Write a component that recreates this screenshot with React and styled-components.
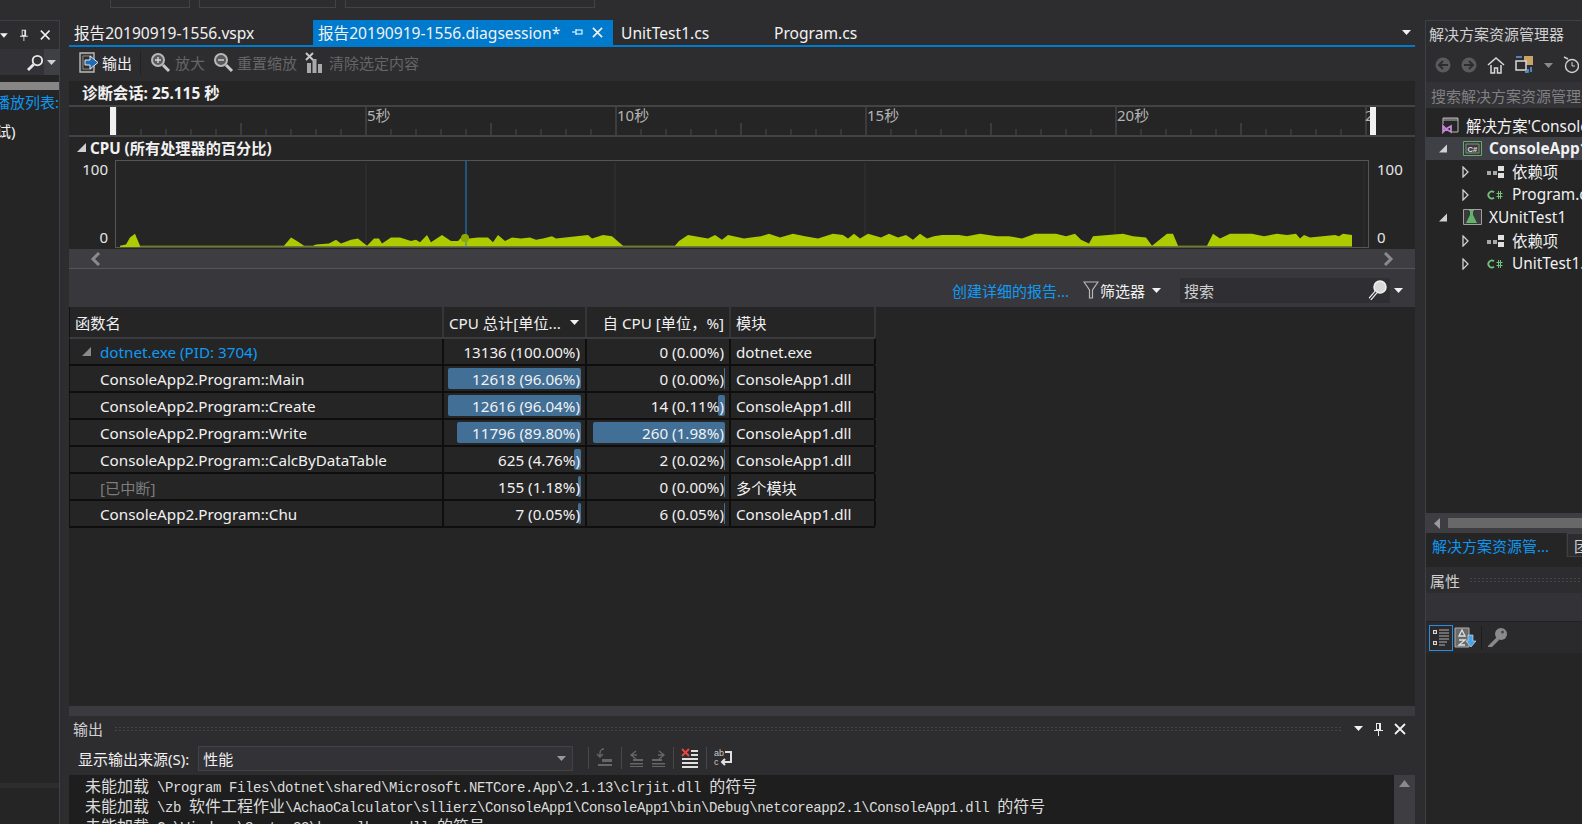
import styled, { createGlobalStyle } from "styled-components";

const Global = createGlobalStyle`
  html, body { margin: 0; padding: 0; background: #2d2d30; }
  body { font-family: "Noto Sans", "Noto Sans CJK SC", sans-serif; font-size: 15px; color: #f1f1f1; }
  * { box-sizing: border-box; }
`;

const mono = `"Liberation Mono", "Noto Sans CJK SC", monospace`;

const Shell = styled.div`
  width: 1582px;
  height: 824px;
  overflow: hidden;
  display: grid;
  grid-template-columns: 60px 1355px 167px;
  grid-template-rows: 20px 804px;
  background: #2d2d30;
`;

const TopStrip = styled.div`
  grid-column: 1 / -1;
  display: flex;
  padding-left: 110px;
  gap: 9px;
  align-items: flex-start;
`;

const TopBox = styled.div`
  width: ${(p) => p.$w}px;
  height: 8px;
  border: 1px solid #434346;
  border-top: none;
  overflow: hidden;
  display: flex;
  align-items: flex-end;
  padding-left: 9px;
  white-space: nowrap;
`;

const TopText = styled.span`
  margin-bottom: 7px;
  line-height: 20px;
  font-size: 15px;
`;

/* left docked panel */
const LeftPanel = styled.aside`
  display: flex;
  flex-direction: column;
  background: #252526;
  border: 1px solid #3f3f46;
  border-width: 1px 1px 0 0;
  overflow: hidden;
`;

const LeftTitle = styled.div`
  height: 28px;
  background: #2d2d30;
  display: flex;
  align-items: center;
  justify-content: flex-end;
  gap: 12px;
  padding-right: 9px;
`;

const LeftSearch = styled.div`
  height: 26px;
  background: #333337;
  display: flex;
  align-items: center;
  justify-content: flex-end;
`;

const LeftSearchArrow = styled.div`
  width: 15px;
  height: 26px;
  background: #3f3f46;
  display: flex;
  align-items: center;
  justify-content: center;
`;

const LeftBand = styled.div`
  height: 8px;
  margin-top: 7px;
  background: #868686;
`;

const LeftLine = styled.div`
  white-space: nowrap;
  display: flex;
  justify-content: flex-end;
  height: 24px;
  line-height: 24px;
  color: ${(p) => p.$color || "#f1f1f1"};
  margin-top: ${(p) => p.$top || 0}px;
`;

const LeftLineStart = styled(LeftLine)`
  justify-content: flex-start;
  margin-left: -4px;
`;

const LeftFoot = styled.div`
  height: 5px;
  margin-top: 640px;
  background: #2d2d30;
`;

/* centre column */
const Center = styled.main`
  display: flex;
  flex-direction: column;
  margin-left: 9px;
  min-width: 0;
  grid-column: 2;
  grid-row: 2;
`;

const TabStrip = styled.div`
  height: 27px;
  display: flex;
  align-items: stretch;
  border-bottom: 2px solid #007acc;
`;

const Tab = styled.div`
  width: ${(p) => p.$w}px;
  padding-left: ${(p) => p.$pad}px;
  display: flex;
  align-items: center;
  font-size: 15.6px;
  white-space: nowrap;
  background: ${(p) => (p.$active ? "#007acc" : "transparent")};
  color: #f1f1f1;
`;

const TabPin = styled.span`
  display: flex;
  margin: 0 9px 0 12px;
`;

const TabEnd = styled.div`
  margin-left: auto;
  padding-right: 4px;
  display: flex;
  align-items: center;
`;

const Toolbar = styled.div`
  height: 34px;
  padding-bottom: 3px;
  background: #2d2d30;
  display: flex;
  align-items: center;
  padding-left: 10px;
`;

const ToolBtn = styled.div`
  display: flex;
  align-items: center;
  gap: ${(p) => p.$gap || 4}px;
  margin-right: ${(p) => p.$right || 8}px;
  color: ${(p) => (p.$off ? "#656565" : "#f1f1f1")};
  white-space: nowrap;
`;

const ToolSep = styled.div`
  width: 1px;
  height: 24px;
  background: #222;
  margin-right: 9px;
`;

const SessionRow = styled.div`
  height: 26px;
  background: #252526;
  border-bottom: 2px solid #434345;
  display: flex;
  align-items: center;
  padding-left: 13px;
  padding-bottom: 2px;
  font-size: 15.4px;
  font-weight: 700;
  color: #f1f1f1;
`;

const Ruler = styled.svg`
  display: block;
  width: 1346px;
  height: 28px;
  background: #252526;
`;

const RulerText = styled.text`
  font-family: "Noto Sans", "Noto Sans CJK SC", sans-serif;
  font-size: 15px;
  fill: #b4b4b4;
`;

const ChartSection = styled.section`
  height: 114px;
  background: #252526;
  border-top: 2px solid #434345;
  display: flex;
  flex-direction: column;
`;

const ChartHead = styled.div`
  height: 23px;
  padding: 0 0 3px 8px;
  display: flex;
  align-items: center;
  gap: 4px;
  font-size: 15.2px;
  font-weight: 700;
  color: #f1f1f1;
`;

const ChartRow = styled.div`
  display: grid;
  grid-template-columns: 46px 1254px 46px;
  height: 89px;
`;

const AxisLabels = styled.div`
  display: flex;
  flex-direction: column;
  justify-content: space-between;
  align-items: ${(p) => (p.$right ? "flex-start" : "flex-end")};
  padding: 0 ${(p) => (p.$right ? 0 : 7)}px 1px ${(p) => (p.$right ? 8 : 0)}px;
  font-size: 15px;
  line-height: 18px;
  color: #e6e6e6;
  height: 87px;
`;

const ChartSvg = styled.svg`
  display: block;
  width: 1254px;
  height: 88px;
  border: 1px solid #555;
`;

const ScrollRow = styled.div`
  height: 20px;
  background: #3e3e42;
  border-bottom: 1px solid #55555a;
  display: flex;
  justify-content: space-between;
  align-items: center;
  padding: 0 21px;
`;

const FilterBar = styled.div`
  height: 38px;
  padding: 4px 8px 0 0;
  background: #38383c;
  display: flex;
  align-items: center;
  justify-content: flex-end;
`;

const FilterLink = styled.div`
  color: #0e9bf5;
  margin-right: 14px;
`;

const FilterLabel = styled.div`
  display: flex;
  align-items: center;
  gap: 1px;
  margin-right: 7px;
`;

const SearchBox = styled.div`
  width: 210px;
  height: 25px;
  margin-left: 19px;
  background: #2f2f33;
  display: flex;
  align-items: center;
  justify-content: space-between;
  padding: 0 1px 0 4px;
  color: #d0d0d0;
`;

const SearchArrow = styled.div`
  width: 17px;
  display: flex;
  justify-content: center;
`;

const TableArea = styled.div`
  flex: 1;
  background: #252526;
`;

const Table = styled.div`
  width: 806px;
`;

const Row = styled.div`
  display: grid;
  grid-template-columns: 374px 143px 144px 145px;
  height: ${(p) => (p.$head ? 32 : 27)}px;
  border-left: 1px solid #111;
  border-bottom: 2px solid ${(p) => (p.$head ? "#3a3a3f" : "#0e0e0e")};
  font-size: 15.2px;
`;

const Cell = styled.div`
  position: relative;
  display: flex;
  align-items: center;
  justify-content: ${(p) => (p.$num ? "flex-end" : "flex-start")};
  gap: 9px;
  padding: ${(p) => (p.$num ? "0 5px 0 0" : `0 0 0 ${p.$pad || 5}px`)};
  border-right: 2px solid ${(p) => (p.$head ? "#35353a" : "#0e0e0e")};
  color: ${(p) => p.$color || "#f1f1f1"};
  white-space: nowrap;
  min-width: 0;
`;

const CellText = styled.span`
  position: relative;
`;

const Bar = styled.div`
  position: absolute;
  right: 4px;
  top: 2px;
  bottom: 2px;
  border-radius: 2px;
  background: #426f96;
`;

const Band = styled.div`
  height: 10px;
  background: #3b3b3f;
`;

/* output panel */
const OutTitle = styled.div`
  height: 25px;
  background: #2d2d30;
  display: flex;
  align-items: center;
  padding: 0 9px 0 4px;
  gap: 11px;
  color: #d0d0d0;
`;

const Dots = styled.div`
  flex: 1;
  height: 6px;
  background-image: radial-gradient(#46464a 1px, transparent 1px);
  background-size: 4px 3px;
`;

const OutBar = styled.div`
  height: 34px;
  background: #2d2d30;
  display: flex;
  align-items: center;
  padding-left: 9px;
  gap: 9px;
`;

const OutLabel = styled.div`
  color: #f1f1f1;
  white-space: nowrap;
`;

const Combo = styled.div`
  width: 375px;
  height: 25px;
  background: #333337;
  border: 1px solid #434346;
  display: flex;
  align-items: center;
  justify-content: space-between;
  padding: 0 6px 0 4px;
  margin-right: 6px;
  flex: none;
`;

const OutIcons = styled.div`
  display: flex;
  align-items: center;
  gap: 7px;
`;

const OutSep = styled.div`
  width: 1px;
  height: 22px;
  background: #48484c;
`;

const OutBody = styled.div`
  display: flex;
  height: 49px;
  background: #1e1e1e;
  overflow: hidden;
`;

const OutText = styled.div`
  flex: 1;
  padding: 3px 0 0 16px;
  font-family: ${mono};
  font-size: 14px;
  letter-spacing: -0.4px;
  color: #dcdcdc;
  white-space: pre;
`;

const OutLine = styled.div`
  height: 20px;
  line-height: 20px;
`;

const Han = styled.span`
  font-size: 16px;
  letter-spacing: 0;
`;

const OutScroll = styled.div`
  width: 21px;
  background: #3e3e42;
  display: flex;
  justify-content: center;
  padding-top: 5px;
`;

/* right panel */
const RightPanel = styled.aside`
  grid-column: 3;
  grid-row: 2;
  margin-left: 10px;
  min-width: 0;
  display: flex;
  flex-direction: column;
  border-left: 1px solid #3f3f46;
  border-top: 1px solid #3f3f46;
  background: #252526;
  overflow: hidden;
`;

const RightTitle = styled.div`
  height: 29px;
  padding: 0 0 4px 3px;
  background: #2d2d30;
  display: flex;
  align-items: center;
  white-space: nowrap;
  color: #d0d0d0;
`;

const RightTools = styled.div`
  height: 32px;
  padding: 0 0 2px 9px;
  background: #2d2d30;
  display: flex;
  align-items: center;
  gap: 10px;
  white-space: nowrap;
`;

const RightSearch = styled.div`
  height: 26px;
  background: #333337;
  padding-left: 5px;
  display: flex;
  align-items: center;
  color: #808080;
  white-space: nowrap;
`;

const Tree = styled.div`
  height: 405px;
  padding-top: 6px;
  background: #252526;
`;

const TreeRow = styled.div`
  height: 23px;
  display: flex;
  align-items: center;
  white-space: nowrap;
  font-size: 15.4px;
  font-weight: ${(p) => (p.$bold ? 700 : 400)};
  background: ${(p) => (p.$on ? "#3f3f46" : "transparent")};
`;

const TreeArrow = styled.div`
  width: 8px;
  margin-left: ${(p) => p.$left}px;
  display: flex;
  justify-content: center;
  flex: none;
`;

const TreeIcon = styled.div`
  margin-left: ${(p) => p.$left}px;
  margin-right: ${(p) => p.$right}px;
  display: flex;
  flex: none;
`;

const HScroll = styled.div`
  height: 20px;
  background: #3e3e42;
  display: flex;
  align-items: center;
  padding-left: 8px;
  gap: 8px;
`;

const HThumb = styled.div`
  flex: 1;
  height: 10px;
  background: #686868;
`;

const DockTabs = styled.div`
  height: 24px;
  display: flex;
  background: #2d2d30;
  white-space: nowrap;
`;

const DockTab = styled.div`
  flex: none;
  width: ${(p) => p.$w}px;
  padding-left: 6px;
  display: flex;
  align-items: center;
  color: ${(p) => (p.$on ? "#0e97f0" : "#d0d0d0")};
  background: ${(p) => (p.$on ? "#252526" : "#2d2d30")};
  border: ${(p) => (p.$on ? "none" : "1px solid #3f3f46")};
  margin-left: ${(p) => (p.$on ? 0 : 1)}px;
`;

const PropTitle = styled.div`
  height: 26px;
  margin-top: 10px;
  background: #2d2d30;
  display: flex;
  align-items: center;
  padding-left: 4px;
  gap: 9px;
  color: #d0d0d0;
`;

const PropBox = styled.div`
  height: 29px;
  background: #333337;
  border-bottom: 1px solid #222;
`;

const PropTools = styled.div`
  height: 31px;
  background: #2a2a2c;
  display: flex;
  align-items: center;
  padding-left: 3px;
  gap: 1px;
`;

const PropActive = styled.div`
  width: 24px;
  height: 26px;
  border: 1px solid #2b8de0;
  display: flex;
  align-items: center;
  justify-content: center;
`;

const PropSep = styled.div`
  width: 1px;
  height: 24px;
  background: #1c1c1c;
  margin: 0 4px;
`;

const PropBody = styled.div`
  flex: 1;
  background: #252526;
`;

/* icons */
const DownTri = ({ c = "#f1f1f1" }) => (
  <svg width="9" height="5" viewBox="0 0 9 5"><path d="M0 0h9L4.500 5z" fill={c} /></svg>
);
const Pin = () => (
  <svg width="9" height="14" viewBox="0 0 9 14"><path d="M2 1h5v7H2zM0 8h9v1H0zM4 9h1v5H4z" fill="#e8e8e8" /><path d="M3 2h2v5H3z" fill="#2d2d30" /></svg>
);
const Close = ({ c = "#f1f1f1", s = 12 }) => (
  <svg width={s} height={s} viewBox="0 0 12 12"><path d="M1 1l10 10M11 1L1 11" stroke={c} strokeWidth="1.800" /></svg>
);
const Lens = ({ s = 18, c = "#e8e8e8", flip }) => (
  <svg width={s} height={s} viewBox="0 0 18 18" style={flip ? { transform: "scaleX(-1)" } : undefined}>
    <circle cx="7" cy="7" r="5" fill="none" stroke={c} strokeWidth="2" />
    <path d="M11 11l6 6" stroke={c} strokeWidth="3" />
  </svg>
);
const ZoomLens = ({ plus }) => (
  <svg width="21" height="21" viewBox="0 0 21 21">
    <circle cx="8" cy="8" r="6" fill="#5a5a5a" stroke="#b8b8b8" strokeWidth="2" />
    <path d={plus ? "M5 8h6M8 5v6" : "M5 8h6"} stroke="#d8d8d8" strokeWidth="1.400" />
    <path d="M13 13l6 6" stroke="#c8c8c8" strokeWidth="3" />
  </svg>
);
const ExportIcon = () => (
  <svg width="20" height="21" viewBox="0 0 20 21">
    <path d="M1 1h14v19H1z" fill="#3a3a3d" stroke="#b8b8b8" strokeWidth="1.400" />
    <path d="M4 4h8v13H4z" fill="#2d2d30" stroke="#8a8a8a" />
    <path d="M6 8h5V4l8 6.500-8 6.500v-4H6z" fill="#1e6cb5" stroke="#e8e8e8" strokeWidth="1" />
  </svg>
);
const ClearIcon = () => (
  <svg width="20" height="21" viewBox="0 0 20 21">
    <path d="M2 11h4v10H2zM7.500 7h4v14h-4zM13 12h4v9h-4z" fill="#a9a9a9" />
    <path d="M1 1l7 7M8 1L1 8" stroke="#c8c8c8" strokeWidth="2" />
  </svg>
);
const ExpandedTri = ({ c = "#d0d0d0" }) => (
  <svg width="9" height="9" viewBox="0 0 9 9"><path d="M9 0v9H0z" fill={c} /></svg>
);
const CollapsedTri = () => (
  <svg width="7" height="12" viewBox="0 0 7 12"><path d="M1 1l5 5-5 5z" fill="none" stroke="#d0d0d0" strokeWidth="1.300" /></svg>
);
const Chevron = ({ right }) => (
  <svg width="11" height="14" viewBox="0 0 11 14"><path d={right ? "M2 1l6 6-6 6" : "M9 1L3 7l6 6"} fill="none" stroke="#8a8a8a" strokeWidth="3" /></svg>
);
const Funnel = () => (
  <svg width="16" height="18" viewBox="0 0 16 18"><path d="M1 1h14L9.500 9v8h-3V9z" fill="none" stroke="#b8b8b8" strokeWidth="1.200" /></svg>
);
const BigLens = () => (
  <svg width="22" height="22" viewBox="0 0 22 22">
    <circle cx="13" cy="8" r="6" fill="#d8d8d8" stroke="#f1f1f1" strokeWidth="1.500" />
    <path d="M9 13l-6 7" stroke="#f1f1f1" strokeWidth="3.500" />
    <path d="M9 13l-6 7" stroke="#38383c" strokeWidth="1.200" />
  </svg>
);
const SolutionIcon = () => (
  <svg width="17" height="17" viewBox="0 0 17 17">
    <path d="M1 1h15v14H9M1 1v6" fill="none" stroke="#b8b8b8" />
    <path d="M1 1h15v3H1z" fill="#b8b8b8" opacity=".5" />
    <path d="M1 9l3 3-3 3zM9 9v6l-5-3z" fill="none" stroke="#c586d8" strokeWidth="1.800" />
  </svg>
);
const CsProjIcon = () => (
  <svg width="19" height="15" viewBox="0 0 19 15">
    <path d="M.5.500h18v14H.500z" fill="#2f3f33" stroke="#6aa86f" />
    <path d="M3 3h13v9H3z" fill="#3c3c3e" stroke="#8a8a8a" />
    <text x="4.500" y="10.500" fontSize="7.500" fontFamily="Liberation Sans" fontWeight="700" fill="#e0e0e0">C#</text>
  </svg>
);
const FlaskIcon = () => (
  <svg width="19" height="17" viewBox="0 0 19 17">
    <path d="M.5.500h18v15H.500z" fill="#3a3a3d" stroke="#a0a0a0" />
    <path d="M6 1h5v1h-1v4l4 8H3l4-8V2H6z" fill="#64b36a" />
  </svg>
);
const DepsIcon = () => (
  <svg width="18" height="13" viewBox="0 0 18 13">
    <path d="M0 6h4v4H0zM6 6h4v4H6z" fill="#a8a8a8" />
    <path d="M11 1h6v5h-6zM11 8h6v5h-6z" fill="#e0e0e0" />
  </svg>
);
const CsIcon = () => (
  <svg width="16" height="10" viewBox="0 0 16 10">
    <path d="M7 2.200A3.500 3.500 0 1 0 7 7.800" fill="none" stroke="#72c07a" strokeWidth="1.800" />
    <path d="M9.500 3.500h6M9.500 6.500h6M11.500 1v8M13.500 1v8" stroke="#72c07a" strokeWidth="1" />
  </svg>
);
const RoundArrow = ({ right }) => (
  <svg width="16" height="16" viewBox="0 0 16 16">
    <circle cx="8" cy="8" r="7.500" fill="#5a5a5d" />
    <path d={right ? "M3 8h8M8 4l4 4-4 4" : "M13 8H5M8 4L4 8l4 4"} fill="none" stroke="#2d2d30" strokeWidth="2" />
  </svg>
);
const HomeIcon = () => (
  <svg width="18" height="18" viewBox="0 0 18 18">
    <path d="M1 9l8-7 8 7" fill="none" stroke="#d8d8d8" strokeWidth="1.600" />
    <path d="M4 9v8h3.500v-5h3v5H14V9" fill="none" stroke="#d8d8d8" strokeWidth="1.500" />
  </svg>
);
const SyncIcon = () => (
  <svg width="19" height="19" viewBox="0 0 19 19">
    <path d="M9 0h9v9H9z" fill="#c9a468" />
    <path d="M1 5h10v9H1z" fill="#2d2d30" stroke="#d8d8d8" strokeWidth="1.500" />
    <path d="M13 13v3h-3M16 11v5" stroke="#5aa5e8" strokeWidth="1.500" fill="none" />
    <path d="M1 1h6" stroke="#5aa5e8" strokeWidth="1.500" />
  </svg>
);
const ClockIcon = () => (
  <svg width="16" height="18" viewBox="0 0 16 18">
    <path d="M1 1l4 2" stroke="#d0d0d0" strokeWidth="1.500" />
    <circle cx="9" cy="10" r="6.500" fill="none" stroke="#d0d0d0" strokeWidth="1.400" />
    <path d="M9 6v4h3" fill="none" stroke="#d0d0d0" />
  </svg>
);
const CatIcon = () => (
  <svg width="18" height="20" viewBox="0 0 18 20">
    <path d="M1 2h4v4H1zM1 13h4v4H1z" fill="#d8d8d8" />
    <path d="M2 4h2M3 3v2M2 15h2M3 14v2" stroke="#222" />
    <path d="M7 2h10M7 5h10M7 8h10M7 11h10M7 14h8M7 17h6" stroke="#b0b0b0" />
  </svg>
);
const SortIcon = () => (
  <svg width="22" height="22" viewBox="0 0 22 22">
    <path d="M1 1h14v19H1z" fill="#6a6a6a" stroke="#b0b0b0" />
    <path d="M5 9l3-6 3 6zM5 13h6l-6 5h6" fill="none" stroke="#e0e0e0" strokeWidth="1.300" />
    <path d="M14 8h5v6h3l-5 6-5-6h2z" fill="#4aa3e8" stroke="#e8e8e8" strokeWidth=".6" />
  </svg>
);
const KeyIcon = () => (
  <svg width="21" height="21" viewBox="0 0 21 21">
    <circle cx="14" cy="7" r="6" fill="#8a8a8a" />
    <circle cx="15.500" cy="5" r="1.500" fill="#4a4a4a" />
    <path d="M10 10l-9 9v1h4l7-7z" fill="#8a8a8a" />
  </svg>
);
const OutIconA = () => (
  <svg width="18" height="20" viewBox="0 0 18 20">
    <path d="M8 1a4 4 0 0 0-4 4v3M1 6l3 3 3-3" fill="none" stroke="#666" strokeWidth="1.400" />
    <path d="M6 11h10v3H6zM2 16h14v2H2z" fill="#666" />
  </svg>
);
const OutIconB = ({ right }) => (
  <svg width="15" height="17" viewBox="0 0 15 17" style={right ? { transform: "scaleX(-1)" } : undefined}>
    <path d="M7 1L2 5l5 4M2 5h6" fill="none" stroke="#666" strokeWidth="1.400" />
    <path d="M4 9h10v2H4zM1 13h13v1.500H1zM1 16h13v1H1z" fill="#666" />
  </svg>
);
const ClearAllIcon = () => (
  <svg width="18" height="20" viewBox="0 0 18 20">
    <path d="M1 1l7 7M8 1L1 8" stroke="#e4463e" strokeWidth="2" />
    <path d="M10 2h7v2h-7zM10 6h7v2h-7zM1 10h16v2H1zM1 14h16v2H1zM1 18h16v2H1z" fill="#e0e0e0" />
  </svg>
);
const WrapIcon = () => (
  <svg width="19" height="20" viewBox="0 0 19 20">
    <text x="0" y="8" fontSize="9" fontFamily="Liberation Sans" fill="#c8c8c8">ab</text>
    <text x="0" y="17" fontSize="9" fontFamily="Liberation Sans" fill="#c8c8c8">c</text>
    <path d="M11 4h6v10H8M11 11l-3 3 3 3" fill="none" stroke="#e0e0e0" strokeWidth="2" />
  </svg>
);
const TinyPin = () => (
  <svg width="11" height="9" viewBox="0 0 11 9"><path d="M0 4h4M4 1v6M4 2h6v4H4M5 6h5" fill="none" stroke="#fff" strokeWidth="1.100" /></svg>
);

/* chart outline read off the picture, x in px from the chart's left edge, h in px above the base */
const shapeA = [[4,1],[10,2],[14,8],[19,11],[24,1],[168,1],[175,8],[181,5],[188,1],[197,1],[200,2],[213,3],[220,6],[225,3],[235,6],[242,7],[251,1],[258,7],[263,7],[266,3],[275,8],[284,8],[295,5],[300,6],[304,4],[311,10],[315,4],[326,10],[335,5],[342,5],[349,11],[353,7],[362,8],[372,8],[377,4],[382,10],[389,5],[396,8],[405,7],[414,8],[420,6],[427,7],[436,9],[440,7],[472,10],[476,7],[487,10],[496,9],[507,1],[559,1],[563,5],[572,10],[592,7],[599,10],[606,6],[612,10],[628,7],[635,8]];
const shapeB = [[645,9],[653,11],[664,8],[677,11],[689,9],[702,7],[717,11],[727,10],[732,7],[738,11],[744,7],[752,11],[765,8],[773,11],[782,8],[790,10],[797,6],[804,11],[811,7],[818,9],[826,10],[843,10],[851,9],[864,11],[881,9],[893,9],[906,7],[919,11],[940,11],[950,9],[959,11],[965,6],[973,3],[977,9],[1007,11],[1017,9],[1030,8],[1036,1],[1051,11],[1057,11],[1062,1],[1091,1],[1097,11],[1104,7],[1114,11],[1136,11],[1148,9],[1161,11],[1171,10],[1180,11],[1184,7],[1188,10],[1194,8],[1219,10],[1223,9],[1227,11],[1236,10]];
const shape = [...shapeA, ...shapeB];
const chartPoints = `4,86 ${shape.map(([x, h]) => `${x},${86 - h * 1.2}`).join(" ")} 1236,86`;

const gridLines = [250, 499, 749, 999];

const rulerTicks = Array.from({ length: 51 }, (_, i) => 47 + i * 25);

const rows = [
  { name: "dotnet.exe (PID: 3704)", kind: "root", total: "13136 (100.00%)", self: "0 (0.00%)", mod: "dotnet.exe" },
  { name: "ConsoleApp2.Program::Main", total: "12618 (96.06%)", tb: 94, self: "0 (0.00%)", sb: 1, mod: "ConsoleApp1.dll" },
  { name: "ConsoleApp2.Program::Create", total: "12616 (96.04%)", tb: 94, self: "14 (0.11%)", sb: 5, mod: "ConsoleApp1.dll" },
  { name: "ConsoleApp2.Program::Write", total: "11796 (89.80%)", tb: 88, self: "260 (1.98%)", sb: 93, mod: "ConsoleApp1.dll" },
  { name: "ConsoleApp2.Program::CalcByDataTable", total: "625 (4.76%)", tb: 4.8, self: "2 (0.02%)", sb: 1, mod: "ConsoleApp1.dll" },
  { name: "[已中断]", kind: "muted", total: "155 (1.18%)", tb: 2, self: "0 (0.00%)", sb: 1, mod: "多个模块" },
  { name: "ConsoleApp2.Program::Chu", total: "7 (0.05%)", tb: 2, self: "6 (0.05%)", sb: 1, mod: "ConsoleApp1.dll" },
];

function Num({ text, bar }) {
  return (
    <Cell $num>
      {bar ? <Bar style={{ width: `${bar}%` }} /> : null}
      <CellText>{text}</CellText>
    </Cell>
  );
}

export default function App() {
  return (
    <>
      <Global />
      <Shell>
        <TopStrip>
          <TopBox $w={80}><TopText>Debug</TopText></TopBox>
          <TopBox $w={137}><TopText>Any CPU</TopText></TopBox>
          <TopBox $w={250}><TopText>ConsoleApp1</TopText></TopBox>
        </TopStrip>

        <LeftPanel>
          <LeftTitle>
            <DownTri />
            <Pin />
            <Close />
          </LeftTitle>
          <LeftSearch>
            <Lens s={17} flip />
            <LeftSearchArrow><DownTri c="#d0d0d0" /></LeftSearchArrow>
          </LeftSearch>
          <LeftBand />
          <LeftLine $color="#0e97f0">播放列表:</LeftLine>
          <LeftLineStart $top={5}>试)</LeftLineStart>
          <LeftFoot />
        </LeftPanel>

        <Center>
          <TabStrip>
            <Tab $w={244} $pad={5}>报告20190919-1556.vspx</Tab>
            <Tab $active $w={300} $pad={5}>
              报告20190919-1556.diagsession*
              <TabPin><TinyPin /></TabPin>
              <Close s={11} />
            </Tab>
            <Tab $w={153} $pad={8}>UnitTest1.cs</Tab>
            <Tab $w={120} $pad={8}>Program.cs</Tab>
            <TabEnd><DownTri /></TabEnd>
          </TabStrip>

          <Toolbar>
            <ToolBtn $gap={3}><ExportIcon />输出</ToolBtn>
            <ToolSep />
            <ToolBtn $off $gap={4}><ZoomLens plus />放大</ToolBtn>
            <ToolBtn $off $gap={3}><ZoomLens />重置缩放</ToolBtn>
            <ToolBtn $off $gap={4}><ClearIcon />清除选定内容</ToolBtn>
          </Toolbar>

          <SessionRow>诊断会话: 25.115 秒</SessionRow>

          <Ruler viewBox="0 0 1346 28">
            {rulerTicks.map((x, i) => (
              <line key={x} x1={x} x2={x} y1={i % 10 === 0 ? 0 : i % 5 === 0 ? 16 : 22} y2="28" stroke={i % 5 === 0 ? "#555" : "#4a4a4a"} />
            ))}
            <RulerText x="298" y="14">5秒</RulerText>
            <RulerText x="548" y="14">10秒</RulerText>
            <RulerText x="798" y="14">15秒</RulerText>
            <RulerText x="1048" y="14">20秒</RulerText>
            <RulerText x="1296" y="14">2</RulerText>
            <rect x="41" y="0" width="6" height="28" fill="#f1f1f1" />
            <rect x="1301" y="0" width="6" height="28" fill="#f1f1f1" />
          </Ruler>

          <ChartSection>
            <ChartHead><ExpandedTri />CPU (所有处理器的百分比)</ChartHead>
            <ChartRow>
              <AxisLabels><span>100</span><span>0</span></AxisLabels>
              <ChartSvg viewBox="0 0 1252 86">
                {gridLines.map((x) => (
                  <line key={x} x1={x} x2={x} y1="2" y2="86" stroke="#343436" />
                ))}
                <line x1="1248" x2="1248" y1="2" y2="86" stroke="#303032" />
                <polygon points={chartPoints} fill="#adcb00" />
                <line x1="24" x2="1236" y1="85.500" y2="85.500" stroke="#6f7f20" />
                <line x1="350" x2="350" y1="0" y2="86" stroke="#1c86d6" />
                <circle cx="349" cy="77" r="4" fill="#8fa800" />
              </ChartSvg>
              <AxisLabels $right><span>100</span><span>0</span></AxisLabels>
            </ChartRow>
          </ChartSection>

          <ScrollRow>
            <Chevron />
            <Chevron right />
          </ScrollRow>

          <FilterBar>
            <FilterLink>创建详细的报告...</FilterLink>
            <FilterLabel><Funnel />筛选器</FilterLabel>
            <DownTri />
            <SearchBox>搜索<BigLens /></SearchBox>
            <SearchArrow><DownTri /></SearchArrow>
          </FilterBar>

          <TableArea>
            <Table>
              <Row $head>
                <Cell $head>函数名</Cell>
                <Cell $head>CPU 总计[单位... <DownTri /></Cell>
                <Cell $head $num>自 CPU [单位，%]</Cell>
                <Cell $head>模块</Cell>
              </Row>
              {rows.map((r) => (
                <Row key={r.name}>
                  <Cell $pad={r.kind === "root" ? 12 : 30} $color={r.kind === "root" ? "#0e9bf5" : r.kind === "muted" ? "#7d7d7d" : undefined}>
                    {r.kind === "root" ? <ExpandedTri c="#8a8a8a" /> : null}
                    {r.name}
                  </Cell>
                  <Num text={r.total} bar={r.tb} />
                  <Num text={r.self} bar={r.sb} />
                  <Cell>{r.mod}</Cell>
                </Row>
              ))}
            </Table>
          </TableArea>

          <Band />

          <OutTitle>
            输出
            <Dots />
            <DownTri />
            <Pin />
            <Close />
          </OutTitle>
          <OutBar>
            <OutLabel>显示输出来源(S):</OutLabel>
            <Combo>性能<DownTri c="#999" /></Combo>
            <OutIcons>
              <OutSep />
              <OutIconA />
              <OutSep />
              <OutIconB />
              <OutIconB right />
              <OutSep />
              <ClearAllIcon />
              <OutSep />
              <WrapIcon />
            </OutIcons>
          </OutBar>
          <OutBody>
            <OutText>
              <OutLine><Han>未能加载</Han> \Program Files\dotnet\shared\Microsoft.NETCore.App\2.1.13\clrjit.dll <Han>的符号</Han></OutLine>
              <OutLine><Han>未能加载</Han> \zb <Han>软件工程作业</Han>\AchaoCalculator\sllierz\ConsoleApp1\ConsoleApp1\bin\Debug\netcoreapp2.1\ConsoleApp1.dll <Han>的符号</Han></OutLine>
              <OutLine><Han>未能加载</Han> C:\Windows\System32\kernelbase.dll <Han>的符号</Han></OutLine>
            </OutText>
            <OutScroll>
              <svg width="11" height="7" viewBox="0 0 11 7"><path d="M0 7h11L5.500 0z" fill="#8a8a8a" /></svg>
            </OutScroll>
          </OutBody>
        </Center>

        <RightPanel>
          <RightTitle>解决方案资源管理器</RightTitle>
          <RightTools>
            <RoundArrow />
            <RoundArrow right />
            <HomeIcon />
            <SyncIcon />
            <DownTri c="#8a8a8a" />
            <ClockIcon />
          </RightTools>
          <RightSearch>搜索解决方案资源管理器</RightSearch>
          <Tree>
            <TreeRow>
              <TreeIcon $left={16} $right={7}><SolutionIcon /></TreeIcon>
              解决方案'ConsoleApp1'
            </TreeRow>
            <TreeRow $on $bold>
              <TreeArrow $left={13}><ExpandedTri /></TreeArrow>
              <TreeIcon $left={16} $right={7}><CsProjIcon /></TreeIcon>
              ConsoleApp1
            </TreeRow>
            <TreeRow>
              <TreeArrow $left={35}><CollapsedTri /></TreeArrow>
              <TreeIcon $left={18} $right={7}><DepsIcon /></TreeIcon>
              依赖项
            </TreeRow>
            <TreeRow>
              <TreeArrow $left={35}><CollapsedTri /></TreeArrow>
              <TreeIcon $left={18} $right={9}><CsIcon /></TreeIcon>
              Program.cs
            </TreeRow>
            <TreeRow>
              <TreeArrow $left={13}><ExpandedTri /></TreeArrow>
              <TreeIcon $left={16} $right={7}><FlaskIcon /></TreeIcon>
              XUnitTest1
            </TreeRow>
            <TreeRow>
              <TreeArrow $left={35}><CollapsedTri /></TreeArrow>
              <TreeIcon $left={18} $right={7}><DepsIcon /></TreeIcon>
              依赖项
            </TreeRow>
            <TreeRow>
              <TreeArrow $left={35}><CollapsedTri /></TreeArrow>
              <TreeIcon $left={18} $right={9}><CsIcon /></TreeIcon>
              UnitTest1.cs
            </TreeRow>
          </Tree>
          <HScroll>
            <svg width="6" height="11" viewBox="0 0 6 11"><path d="M6 0v11L0 5.500z" fill="#9a9a9a" /></svg>
            <HThumb />
          </HScroll>
          <DockTabs>
            <DockTab $on $w={140}>解决方案资源管...</DockTab>
            <DockTab $w={40}>团队资源管理器</DockTab>
          </DockTabs>
          <PropTitle>属性<Dots /></PropTitle>
          <PropBox />
          <PropTools>
            <PropActive><CatIcon /></PropActive>
            <SortIcon />
            <PropSep />
            <KeyIcon />
          </PropTools>
          <PropBody />
        </RightPanel>
      </Shell>
    </>
  );
}
